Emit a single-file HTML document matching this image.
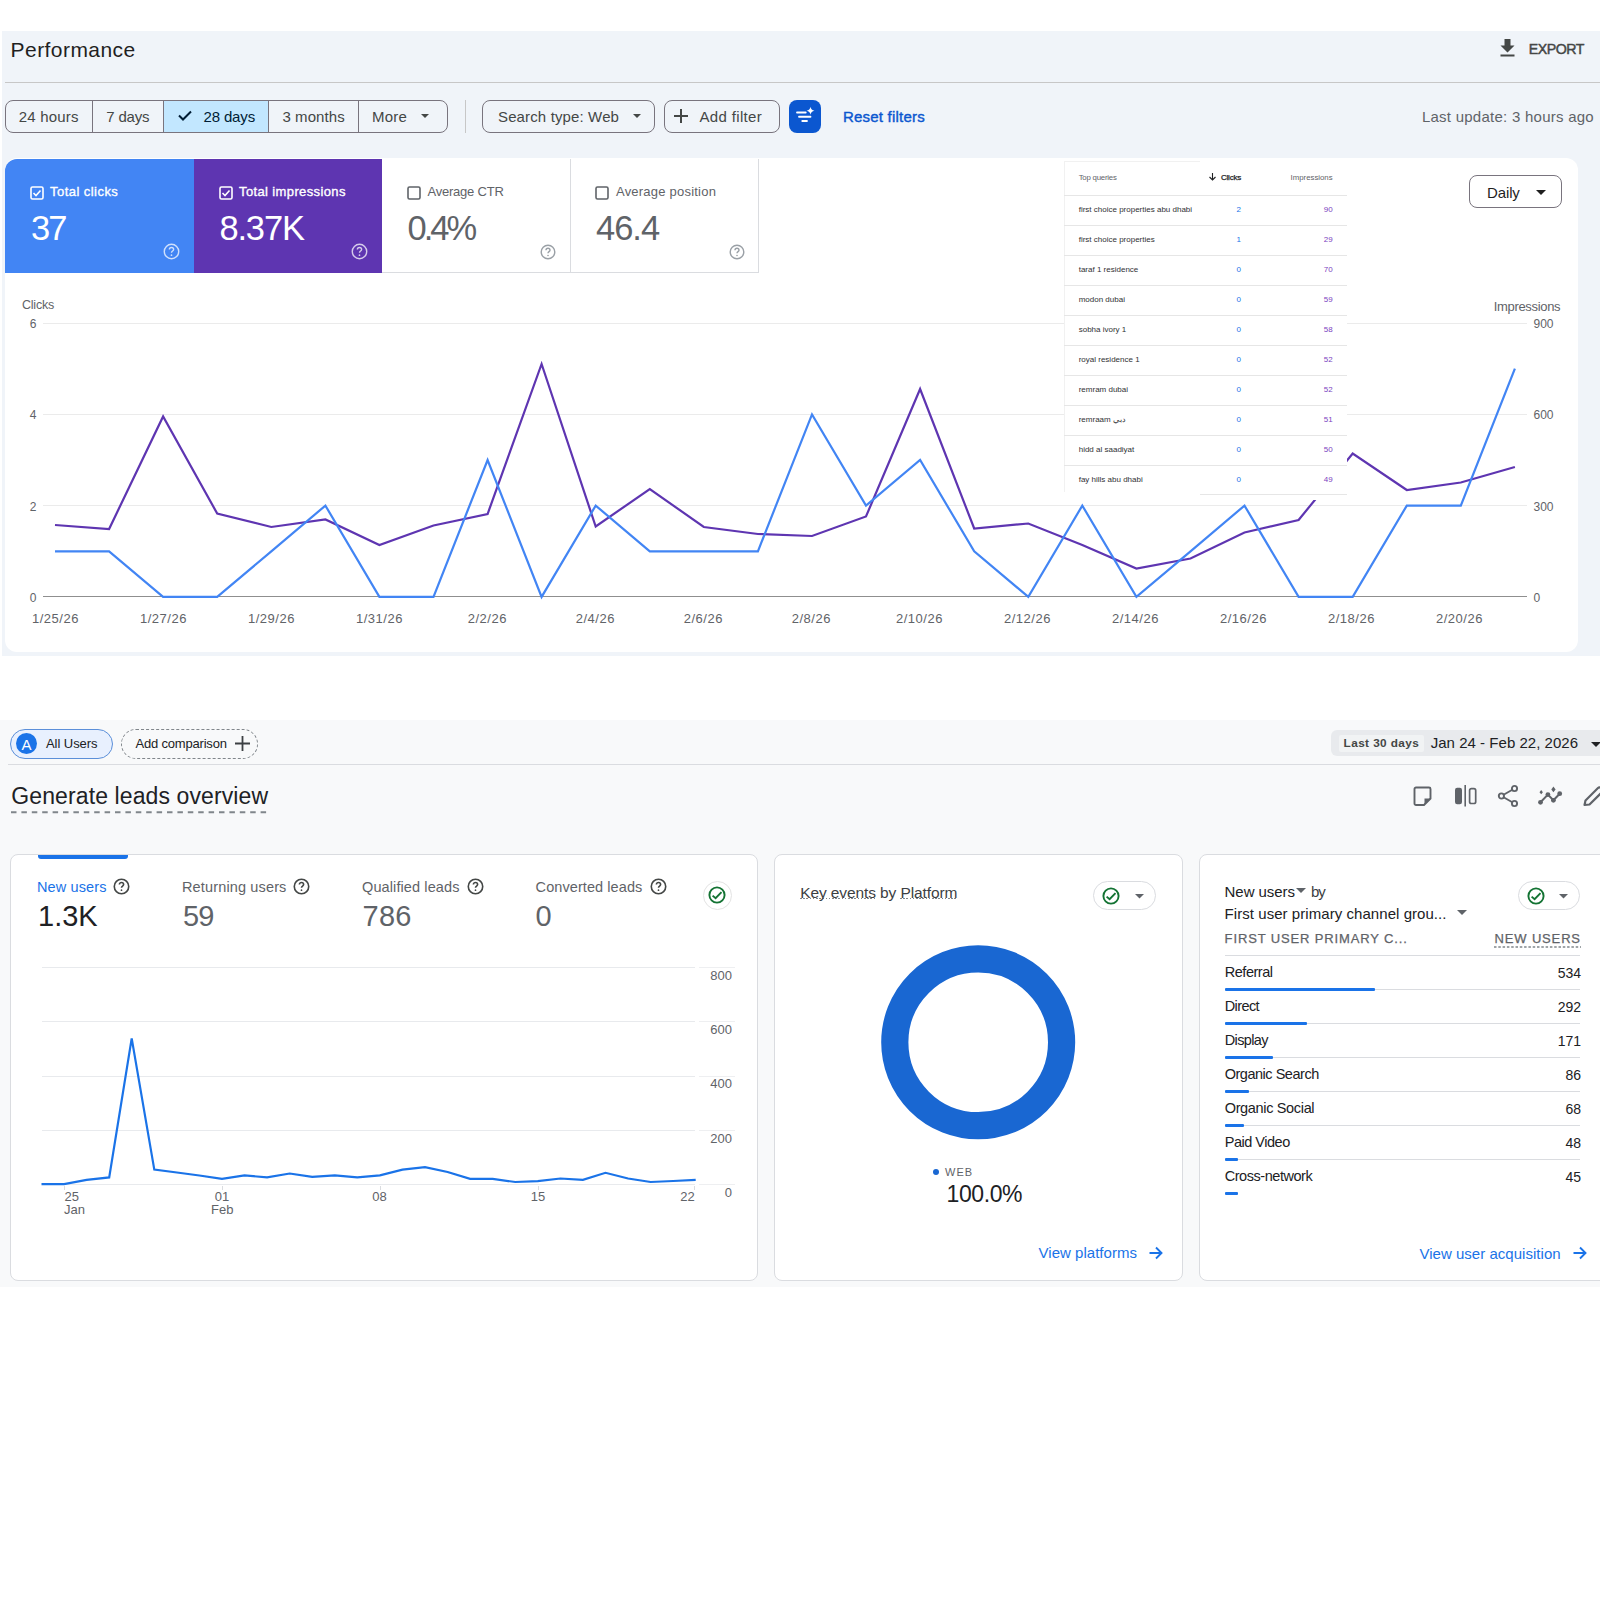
<!DOCTYPE html><html><head><meta charset="utf-8"><style>
html,body{margin:0;padding:0;}
body{width:1600px;height:1600px;position:relative;overflow:hidden;background:#fff;font-family:"Liberation Sans",sans-serif;}
.t{position:absolute;white-space:nowrap;line-height:1;}
svg{position:absolute;overflow:visible;}
.dot{background-image:repeating-linear-gradient(to right,#80868b 0 1.6px,transparent 1.6px 3.2px);background-size:100% 1px;background-repeat:no-repeat;background-position:0 calc(100% - 1.2px);}
</style></head><body>
<div style="position:absolute;left:2.00px;top:31.00px;width:1598.00px;height:625.00px;background:#f0f4f9;"></div><div class="t" style="left:10.60px;top:39.12px;font-size:21px;color:#1f1f1f;font-weight:normal;letter-spacing:0.440px;">Performance</div><svg style="left:1500px;top:39px" width="15" height="18" viewBox="0 0 15 18"><path d="M4.5 0h6v6.5h4L7.5 13.5 0.5 6.5h4z" fill="#444746"/><rect x="0.5" y="15.5" width="14" height="2" fill="#444746"/></svg><div class="t" style="left:1528.75px;top:41.98px;font-size:14.2px;color:#444746;font-weight:normal;-webkit-text-stroke:0.45px #444746;letter-spacing:-0.470px;">EXPORT</div><div style="position:absolute;left:5.00px;top:82.00px;width:1595.00px;height:1.00px;background:#c7c7c7;"></div><div style="position:absolute;left:5.00px;top:100.00px;width:442.60px;height:33.00px;box-sizing:border-box;border:1px solid #79747e;border-radius:8px;"></div><div style="position:absolute;left:164.00px;top:101.00px;width:104.40px;height:31.00px;background:#c2e7ff;"></div><div style="position:absolute;left:92.25px;top:100.00px;width:1.00px;height:33.00px;background:#79747e;"></div><div style="position:absolute;left:163.25px;top:100.00px;width:1.00px;height:33.00px;background:#79747e;"></div><div style="position:absolute;left:267.90px;top:100.00px;width:1.00px;height:33.00px;background:#79747e;"></div><div style="position:absolute;left:358.10px;top:100.00px;width:1.00px;height:33.00px;background:#79747e;"></div><div class="t" style="left:18.75px;top:109.20px;font-size:15px;color:#444746;font-weight:normal;letter-spacing:0.179px;">24 hours</div><div class="t" style="left:106.25px;top:109.20px;font-size:15px;color:#444746;font-weight:normal;letter-spacing:-0.170px;">7 days</div><svg style="left:178px;top:110px" width="14" height="11" viewBox="0 0 14 11"><path d="M1 5.5l4 4L13 1.5" fill="none" stroke="#001d35" stroke-width="2"/></svg><div class="t" style="left:203.60px;top:109.20px;font-size:15px;color:#001d35;font-weight:normal;letter-spacing:-0.167px;">28 days</div><div class="t" style="left:282.40px;top:109.20px;font-size:15px;color:#444746;font-weight:normal;letter-spacing:0.086px;">3 months</div><div class="t" style="left:372.00px;top:109.20px;font-size:15px;color:#444746;font-weight:normal;letter-spacing:0.200px;">More</div><svg style="left:421px;top:114px" width="8" height="4" viewBox="0 0 8 4"><path d="M0 0h8L4 4z" fill="#444746"/></svg><div style="position:absolute;left:464.50px;top:100.00px;width:1.00px;height:33.00px;background:#c7c7c7;"></div><div style="position:absolute;left:481.70px;top:100.00px;width:173.30px;height:32.60px;box-sizing:border-box;border:1px solid #79747e;border-radius:8px;"></div><div class="t" style="left:498.00px;top:109.20px;font-size:15px;color:#444746;font-weight:normal;letter-spacing:0.133px;">Search type: Web</div><svg style="left:633px;top:114px" width="8" height="4" viewBox="0 0 8 4"><path d="M0 0h8L4 4z" fill="#444746"/></svg><div style="position:absolute;left:663.50px;top:100.00px;width:116.50px;height:32.60px;box-sizing:border-box;border:1px solid #79747e;border-radius:8px;"></div><svg style="left:674px;top:109px" width="14" height="14" viewBox="0 0 14 14"><path d="M7 0v14M0 7h14" stroke="#444746" stroke-width="2"/></svg><div class="t" style="left:699.40px;top:109.20px;font-size:15px;color:#444746;font-weight:normal;letter-spacing:0.356px;">Add filter</div><div style="position:absolute;left:788.70px;top:100.00px;width:32.30px;height:32.60px;background:#0b57d0;border-radius:8px;"></div><svg style="left:785px;top:96px" width="40" height="40" viewBox="0 0 40 40"><path d="M12 16.5H20.75M14 20.75H25.5M17.25 25H22" stroke="#fff" stroke-width="1.8" stroke-linecap="round"/><path d="M25.5 10.8Q26 14.25 29.45 14.75Q26 15.25 25.5 18.7Q25 15.25 21.55 14.75Q25 14.25 25.5 10.8z" fill="#fff"/></svg><div class="t" style="left:843.00px;top:109.20px;font-size:15px;color:#0b57d0;font-weight:normal;-webkit-text-stroke:0.4px #0b57d0;letter-spacing:0.208px;">Reset filters</div><div class="t" style="left:1421.90px;top:109.20px;font-size:15px;color:#5f6368;font-weight:normal;letter-spacing:0.254px;">Last update: 3 hours ago</div><div style="position:absolute;left:5.00px;top:158.00px;width:1573.00px;height:494.00px;background:#fff;border-radius:12px;"></div><div style="position:absolute;left:5.00px;top:158.50px;width:188.50px;height:114.50px;background:#4285f4;border-top-left-radius:12px;"></div><div style="position:absolute;left:193.50px;top:158.50px;width:188.50px;height:114.50px;background:#5e35b1;"></div><div style="position:absolute;left:382.00px;top:272.00px;width:376.00px;height:1.00px;background:#dadce0;"></div><div style="position:absolute;left:569.50px;top:158.50px;width:1.00px;height:114.50px;background:#dadce0;"></div><div style="position:absolute;left:757.50px;top:158.50px;width:1.00px;height:114.50px;background:#dadce0;"></div><svg style="left:30px;top:185.6px" width="14" height="14" viewBox="0 0 14 14"><rect x="1" y="1" width="12" height="12" rx="1.5" fill="none" stroke="#fff" stroke-width="1.6"/><path d="M3.5 7l2.5 2.5 4.5-5" fill="none" stroke="#fff" stroke-width="1.6"/></svg><div class="t" style="left:50.00px;top:184.99px;font-size:13px;color:#fff;font-weight:normal;-webkit-text-stroke:0.35px #fff;letter-spacing:0.455px;">Total clicks</div><div class="t" style="left:31.00px;top:210.79px;font-size:34.5px;color:#fff;font-weight:normal;letter-spacing:-2.000px;">37</div><svg style="left:162.50px;top:242.50px" width="17" height="17" viewBox="0 0 24 24"><circle cx="12" cy="12" r="10.2" fill="none" stroke="rgba(255,255,255,0.75)" stroke-width="1.98"/><path d="M9 9.3a3 3 0 0 1 6 0c0 2-3 2.2-3 4.4" fill="none" stroke="rgba(255,255,255,0.75)" stroke-width="1.98"/><circle cx="12" cy="17.2" r="1.2" fill="rgba(255,255,255,0.75)"/></svg><svg style="left:218.5px;top:185.6px" width="14" height="14" viewBox="0 0 14 14"><rect x="1" y="1" width="12" height="12" rx="1.5" fill="none" stroke="#fff" stroke-width="1.6"/><path d="M3.5 7l2.5 2.5 4.5-5" fill="none" stroke="#fff" stroke-width="1.6"/></svg><div class="t" style="left:239.00px;top:184.99px;font-size:13px;color:#fff;font-weight:normal;-webkit-text-stroke:0.35px #fff;letter-spacing:0.375px;">Total impressions</div><div class="t" style="left:219.40px;top:210.79px;font-size:34.5px;color:#fff;font-weight:normal;letter-spacing:-1.150px;">8.37K</div><svg style="left:351.20px;top:243.00px" width="17" height="17" viewBox="0 0 24 24"><circle cx="12" cy="12" r="10.2" fill="none" stroke="rgba(255,255,255,0.75)" stroke-width="1.98"/><path d="M9 9.3a3 3 0 0 1 6 0c0 2-3 2.2-3 4.4" fill="none" stroke="rgba(255,255,255,0.75)" stroke-width="1.98"/><circle cx="12" cy="17.2" r="1.2" fill="rgba(255,255,255,0.75)"/></svg><svg style="left:407px;top:185.6px" width="14" height="14" viewBox="0 0 14 14"><rect x="1" y="1" width="12" height="12" rx="1.5" fill="none" stroke="#5f6368" stroke-width="1.6"/></svg><div class="t" style="left:427.50px;top:184.99px;font-size:13px;color:#5f6368;font-weight:normal;letter-spacing:-0.225px;">Average CTR</div><div class="t" style="left:407.50px;top:210.79px;font-size:34.5px;color:#5f6368;font-weight:normal;letter-spacing:-3.000px;">0.4%</div><svg style="left:540.00px;top:243.75px" width="16" height="16" viewBox="0 0 24 24"><circle cx="12" cy="12" r="10.2" fill="none" stroke="#9aa0a6" stroke-width="2.10"/><path d="M9 9.3a3 3 0 0 1 6 0c0 2-3 2.2-3 4.4" fill="none" stroke="#9aa0a6" stroke-width="2.10"/><circle cx="12" cy="17.2" r="1.2" fill="#9aa0a6"/></svg><svg style="left:595px;top:185.6px" width="14" height="14" viewBox="0 0 14 14"><rect x="1" y="1" width="12" height="12" rx="1.5" fill="none" stroke="#5f6368" stroke-width="1.6"/></svg><div class="t" style="left:616.00px;top:184.99px;font-size:13px;color:#5f6368;font-weight:normal;letter-spacing:0.217px;">Average position</div><div class="t" style="left:596.00px;top:210.79px;font-size:34.5px;color:#5f6368;font-weight:normal;letter-spacing:-1.000px;">46.4</div><svg style="left:728.75px;top:243.75px" width="16" height="16" viewBox="0 0 24 24"><circle cx="12" cy="12" r="10.2" fill="none" stroke="#9aa0a6" stroke-width="2.10"/><path d="M9 9.3a3 3 0 0 1 6 0c0 2-3 2.2-3 4.4" fill="none" stroke="#9aa0a6" stroke-width="2.10"/><circle cx="12" cy="17.2" r="1.2" fill="#9aa0a6"/></svg><div style="position:absolute;left:1468.50px;top:175.20px;width:93.50px;height:33.30px;box-sizing:border-box;border:1px solid #79747e;border-radius:8px;"></div><div class="t" style="left:1487.00px;top:184.80px;font-size:15px;color:#1f1f1f;font-weight:normal;letter-spacing:-0.125px;">Daily</div><svg style="left:1536px;top:190px" width="10" height="5" viewBox="0 0 10 5"><path d="M0 0h10L5 5z" fill="#1f1f1f"/></svg><div style="position:absolute;left:42.50px;top:322.60px;width:1484.50px;height:1.00px;background:#ebebeb;"></div><div style="position:absolute;left:42.50px;top:413.90px;width:1484.50px;height:1.00px;background:#ebebeb;"></div><div style="position:absolute;left:42.50px;top:505.20px;width:1484.50px;height:1.00px;background:#ebebeb;"></div><div style="position:absolute;left:42.50px;top:596.20px;width:1484.50px;height:1.30px;background:#8f8f8f;"></div><div class="t" style="left:21.90px;top:299.42px;font-size:12.5px;color:#5f6368;font-weight:normal;letter-spacing:-0.180px;">Clicks</div><div class="t" style="right:1563.70px;top:318.04px;font-size:12px;color:#5f6368;font-weight:normal;">6</div><div class="t" style="right:1563.70px;top:409.34px;font-size:12px;color:#5f6368;font-weight:normal;">4</div><div class="t" style="right:1563.70px;top:500.64px;font-size:12px;color:#5f6368;font-weight:normal;">2</div><div class="t" style="right:1563.70px;top:591.84px;font-size:12px;color:#5f6368;font-weight:normal;">0</div><div class="t" style="left:1493.70px;top:299.99px;font-size:13px;color:#5f6368;font-weight:normal;letter-spacing:-0.320px;">Impressions</div><div class="t" style="left:1533.50px;top:318.04px;font-size:12px;color:#5f6368;font-weight:normal;">900</div><div class="t" style="left:1533.50px;top:409.34px;font-size:12px;color:#5f6368;font-weight:normal;">600</div><div class="t" style="left:1533.50px;top:500.64px;font-size:12px;color:#5f6368;font-weight:normal;">300</div><div class="t" style="left:1533.50px;top:591.84px;font-size:12px;color:#5f6368;font-weight:normal;">0</div><div class="t" style="left:31.95px;top:611.99px;font-size:13px;color:#5f6368;font-weight:normal;letter-spacing:0.518px;">1/25/26</div><div class="t" style="left:139.95px;top:611.99px;font-size:13px;color:#5f6368;font-weight:normal;letter-spacing:0.518px;">1/27/26</div><div class="t" style="left:247.95px;top:611.99px;font-size:13px;color:#5f6368;font-weight:normal;letter-spacing:0.518px;">1/29/26</div><div class="t" style="left:355.95px;top:611.99px;font-size:13px;color:#5f6368;font-weight:normal;letter-spacing:0.518px;">1/31/26</div><div class="t" style="left:467.70px;top:611.99px;font-size:13px;color:#5f6368;font-weight:normal;letter-spacing:0.520px;">2/2/26</div><div class="t" style="left:575.70px;top:611.99px;font-size:13px;color:#5f6368;font-weight:normal;letter-spacing:0.520px;">2/4/26</div><div class="t" style="left:683.70px;top:611.99px;font-size:13px;color:#5f6368;font-weight:normal;letter-spacing:0.520px;">2/6/26</div><div class="t" style="left:791.70px;top:611.99px;font-size:13px;color:#5f6368;font-weight:normal;letter-spacing:0.520px;">2/8/26</div><div class="t" style="left:895.95px;top:611.99px;font-size:13px;color:#5f6368;font-weight:normal;letter-spacing:0.518px;">2/10/26</div><div class="t" style="left:1003.95px;top:611.99px;font-size:13px;color:#5f6368;font-weight:normal;letter-spacing:0.518px;">2/12/26</div><div class="t" style="left:1111.95px;top:611.99px;font-size:13px;color:#5f6368;font-weight:normal;letter-spacing:0.518px;">2/14/26</div><div class="t" style="left:1219.95px;top:611.99px;font-size:13px;color:#5f6368;font-weight:normal;letter-spacing:0.518px;">2/16/26</div><div class="t" style="left:1327.95px;top:611.99px;font-size:13px;color:#5f6368;font-weight:normal;letter-spacing:0.518px;">2/18/26</div><div class="t" style="left:1435.95px;top:611.99px;font-size:13px;color:#5f6368;font-weight:normal;letter-spacing:0.518px;">2/20/26</div><svg style="left:0;top:0" width="1600" height="700"><polyline points="55.0,525.0 109.1,529.0 163.1,416.5 217.2,513.5 271.3,527.0 325.4,519.5 379.4,545.0 433.5,525.5 487.6,514.0 541.6,364.0 595.7,526.5 649.8,489.0 703.8,527.0 757.9,534.0 812.0,536.0 866.0,516.5 920.1,389.0 974.2,528.5 1028.3,523.5 1082.3,545.0 1136.4,568.5 1190.5,558.5 1244.5,532.5 1298.6,520.0 1352.7,453.5 1406.8,490.0 1460.8,482.5 1514.9,467.0" fill="none" stroke="#5e35b1" stroke-width="2.2" stroke-linejoin="miter"/><polyline points="55.0,551.3 109.1,551.3 163.1,596.9 217.2,596.9 271.3,551.3 325.4,505.6 379.4,596.9 433.5,596.9 487.6,460.0 541.6,596.9 595.7,505.6 649.8,551.3 703.8,551.3 757.9,551.3 812.0,414.4 866.0,505.6 920.1,460.0 974.2,551.3 1028.3,596.9 1082.3,505.6 1136.4,596.9 1190.5,551.3 1244.5,505.6 1298.6,596.9 1352.7,596.9 1406.8,505.6 1460.8,505.6 1514.9,368.7" fill="none" stroke="#4285f4" stroke-width="2.2"/></svg><div style="position:absolute;left:1063.50px;top:160.50px;width:283.00px;height:334.50px;background:#fff;"></div><div style="position:absolute;left:1063.50px;top:160.50px;width:1.00px;height:331.50px;background:#f1f1f1;"></div><div style="position:absolute;left:1063.50px;top:160.50px;width:136.50px;height:1.00px;background:#f1f1f1;"></div><div class="t" style="left:1078.70px;top:174.40px;font-size:7.8px;color:#5f6368;font-weight:normal;letter-spacing:-0.220px;">Top queries</div><svg style="left:1209px;top:173px" width="7" height="8" viewBox="0 0 7 8"><path d="M3.5 0v7M0.5 4l3 3 3-3" fill="none" stroke="#202124" stroke-width="1.1"/></svg><div class="t" style="left:1221.00px;top:174.23px;font-size:8px;color:#202124;font-weight:normal;-webkit-text-stroke:0.25px #202124;letter-spacing:-0.220px;">Clicks</div><div class="t" style="right:267.40px;top:174.40px;font-size:7.8px;color:#5f6368;font-weight:normal;">Impressions</div><div style="position:absolute;left:1063.50px;top:194.80px;width:283.00px;height:1.00px;background:#e6e6e6;"></div><div class="t" style="left:1078.70px;top:206.33px;font-size:8px;color:#303134;font-weight:normal;">first choice properties abu dhabi</div><div class="t" style="right:359.00px;top:206.33px;font-size:8px;color:#1a73e8;font-weight:normal;">2</div><div class="t" style="right:267.40px;top:206.33px;font-size:8px;color:#7b3fc0;font-weight:normal;">90</div><div style="position:absolute;left:1063.50px;top:224.80px;width:283.00px;height:1.00px;background:#e6e6e6;"></div><div class="t" style="left:1078.70px;top:236.33px;font-size:8px;color:#303134;font-weight:normal;">first choice properties</div><div class="t" style="right:359.00px;top:236.33px;font-size:8px;color:#1a73e8;font-weight:normal;">1</div><div class="t" style="right:267.40px;top:236.33px;font-size:8px;color:#7b3fc0;font-weight:normal;">29</div><div style="position:absolute;left:1063.50px;top:254.80px;width:283.00px;height:1.00px;background:#e6e6e6;"></div><div class="t" style="left:1078.70px;top:266.33px;font-size:8px;color:#303134;font-weight:normal;">taraf 1 residence</div><div class="t" style="right:359.00px;top:266.33px;font-size:8px;color:#1a73e8;font-weight:normal;">0</div><div class="t" style="right:267.40px;top:266.33px;font-size:8px;color:#7b3fc0;font-weight:normal;">70</div><div style="position:absolute;left:1063.50px;top:284.80px;width:283.00px;height:1.00px;background:#e6e6e6;"></div><div class="t" style="left:1078.70px;top:296.33px;font-size:8px;color:#303134;font-weight:normal;">modon dubai</div><div class="t" style="right:359.00px;top:296.33px;font-size:8px;color:#1a73e8;font-weight:normal;">0</div><div class="t" style="right:267.40px;top:296.33px;font-size:8px;color:#7b3fc0;font-weight:normal;">59</div><div style="position:absolute;left:1063.50px;top:314.80px;width:283.00px;height:1.00px;background:#e6e6e6;"></div><div class="t" style="left:1078.70px;top:326.33px;font-size:8px;color:#303134;font-weight:normal;">sobha ivory 1</div><div class="t" style="right:359.00px;top:326.33px;font-size:8px;color:#1a73e8;font-weight:normal;">0</div><div class="t" style="right:267.40px;top:326.33px;font-size:8px;color:#7b3fc0;font-weight:normal;">58</div><div style="position:absolute;left:1063.50px;top:344.80px;width:283.00px;height:1.00px;background:#e6e6e6;"></div><div class="t" style="left:1078.70px;top:356.33px;font-size:8px;color:#303134;font-weight:normal;">royal residence 1</div><div class="t" style="right:359.00px;top:356.33px;font-size:8px;color:#1a73e8;font-weight:normal;">0</div><div class="t" style="right:267.40px;top:356.33px;font-size:8px;color:#7b3fc0;font-weight:normal;">52</div><div style="position:absolute;left:1063.50px;top:374.80px;width:283.00px;height:1.00px;background:#e6e6e6;"></div><div class="t" style="left:1078.70px;top:386.33px;font-size:8px;color:#303134;font-weight:normal;">remram dubai</div><div class="t" style="right:359.00px;top:386.33px;font-size:8px;color:#1a73e8;font-weight:normal;">0</div><div class="t" style="right:267.40px;top:386.33px;font-size:8px;color:#7b3fc0;font-weight:normal;">52</div><div style="position:absolute;left:1063.50px;top:404.80px;width:283.00px;height:1.00px;background:#e6e6e6;"></div><div class="t" style="left:1078.70px;top:416.33px;font-size:8px;color:#303134;font-weight:normal;">remraam دبي</div><div class="t" style="right:359.00px;top:416.33px;font-size:8px;color:#1a73e8;font-weight:normal;">0</div><div class="t" style="right:267.40px;top:416.33px;font-size:8px;color:#7b3fc0;font-weight:normal;">51</div><div style="position:absolute;left:1063.50px;top:434.80px;width:283.00px;height:1.00px;background:#e6e6e6;"></div><div class="t" style="left:1078.70px;top:446.33px;font-size:8px;color:#303134;font-weight:normal;">hidd al saadiyat</div><div class="t" style="right:359.00px;top:446.33px;font-size:8px;color:#1a73e8;font-weight:normal;">0</div><div class="t" style="right:267.40px;top:446.33px;font-size:8px;color:#7b3fc0;font-weight:normal;">50</div><div style="position:absolute;left:1063.50px;top:464.80px;width:283.00px;height:1.00px;background:#e6e6e6;"></div><div class="t" style="left:1078.70px;top:476.33px;font-size:8px;color:#303134;font-weight:normal;">fay hills abu dhabi</div><div class="t" style="right:359.00px;top:476.33px;font-size:8px;color:#1a73e8;font-weight:normal;">0</div><div class="t" style="right:267.40px;top:476.33px;font-size:8px;color:#7b3fc0;font-weight:normal;">49</div><div style="position:absolute;left:1200.00px;top:495.00px;width:146.50px;height:5.00px;background:#fff;"></div><div style="position:absolute;left:1200.00px;top:494.30px;width:146.50px;height:1.00px;background:#e6e6e6;"></div><div style="position:absolute;left:0.00px;top:720.00px;width:1600.00px;height:567.00px;background:#f8f9fa;"></div><div style="position:absolute;left:10.30px;top:729.00px;width:102.30px;height:29.60px;box-sizing:border-box;border:1.8px solid #5b8fd9;border-radius:15px;background:#e8f0fe;"></div><div style="position:absolute;left:16px;top:733px;width:21px;height:21px;border-radius:50%;background:#1a73e8;"></div><div class="t" style="left:26.50px;transform:translateX(-50%);top:736.60px;font-size:15px;color:#fff;font-weight:normal;">A</div><div class="t" style="left:46.00px;top:737.39px;font-size:13px;color:#202124;font-weight:normal;letter-spacing:-0.062px;">All Users</div><div style="position:absolute;left:121.00px;top:729.00px;width:137.00px;height:29.60px;box-sizing:border-box;border:1px dashed #80868b;border-radius:15px;"></div><div class="t" style="left:135.50px;top:737.39px;font-size:13px;color:#202124;font-weight:normal;letter-spacing:-0.192px;">Add comparison</div><svg style="left:234.5px;top:736px" width="15" height="15" viewBox="0 0 15 15"><path d="M7.5 0v15M0 7.5h15" stroke="#3c4043" stroke-width="1.8"/></svg><div style="position:absolute;left:8.40px;top:764.00px;width:1591.60px;height:1.00px;background:#dadce0;"></div><div style="position:absolute;left:1331.00px;top:729.60px;width:279.00px;height:26.80px;background:#e8eaed;border-radius:6px;"></div><div style="position:absolute;left:1339.00px;top:735.00px;width:85.00px;height:17.00px;background:#f1f3f4;border-radius:2px;"></div><div class="t" style="left:1343.60px;top:737.71px;font-size:11.8px;color:#444746;font-weight:bold;letter-spacing:0.400px;">Last 30 days</div><div class="t" style="left:1430.70px;top:735.30px;font-size:15px;color:#202124;font-weight:normal;letter-spacing:0.030px;">Jan 24 - Feb 22, 2026</div><svg style="left:1591px;top:742px" width="10" height="5" viewBox="0 0 10 5"><path d="M0 0h10L5 5z" fill="#202124"/></svg><div class="t" style="left:11.25px;top:785.23px;font-size:23px;color:#202124;font-weight:normal;letter-spacing:0.111px;">Generate leads overview</div><svg style="left:11px;top:810.5px" width="258" height="3" viewBox="0 0 258 3"><path d="M0 1.2H258" stroke="#80868b" stroke-width="2" stroke-dasharray="5.5 4.9"/></svg><svg style="left:1413px;top:786px" width="20" height="20" viewBox="0 0 20 20"><path d="M3 1.5h13a1.5 1.5 0 0 1 1.5 1.5v9.5l-6.5 6.5H3A1.5 1.5 0 0 1 1.5 17.5V3A1.5 1.5 0 0 1 3 1.5z" fill="none" stroke="#5f6368" stroke-width="1.9"/><path d="M11.5 18.5v-6h6z" fill="#5f6368"/></svg><svg style="left:1454px;top:785px" width="23" height="22" viewBox="0 0 23 22"><rect x="1" y="2.8" width="7" height="16.5" rx="2.2" fill="#5f6368"/><path d="M11.2 0v21.5" stroke="#5f6368" stroke-width="1.6"/><rect x="15.6" y="3.6" width="6.1" height="14.9" rx="1.8" fill="none" stroke="#5f6368" stroke-width="1.7"/></svg><svg style="left:1497px;top:784px" width="22" height="24" viewBox="0 0 22 24"><path d="M4.4 12L17.5 4.5M4.4 12l13.1 7.5" stroke="#5f6368" stroke-width="1.9"/><circle cx="17.5" cy="4.5" r="2.6" fill="#f8f9fa" stroke="#5f6368" stroke-width="1.9"/><circle cx="4.4" cy="12" r="2.6" fill="#f8f9fa" stroke="#5f6368" stroke-width="1.9"/><circle cx="17.5" cy="19.5" r="2.6" fill="#f8f9fa" stroke="#5f6368" stroke-width="1.9"/></svg><svg style="left:1536px;top:786px" width="28" height="20" viewBox="0 0 28 20"><path d="M4.5 16.3L11.9 8.6 17.4 14.3 23.7 7.7" fill="none" stroke="#5f6368" stroke-width="2"/><circle cx="4.5" cy="16.3" r="2.4" fill="#5f6368"/><circle cx="11.9" cy="8.6" r="2.4" fill="#5f6368"/><circle cx="17.4" cy="14.3" r="2.4" fill="#5f6368"/><circle cx="23.7" cy="7.7" r="2.4" fill="#5f6368"/><path d="M5.2 4.1l1.7 2.1-1.7 2.1-1.7-2.1z" fill="#5f6368"/><path d="M17.4 0.6l2.2 2.8-2.2 2.8-2.1-2.8z" fill="#5f6368"/></svg><svg style="left:1580px;top:784px" width="26" height="26" viewBox="0 0 26 26"><path d="M4.5 21l1-4.5L18 4a2 2 0 0 1 2.8 0l1.3 1.3a2 2 0 0 1 0 2.8L9.5 20.5z" fill="none" stroke="#5f6368" stroke-width="2.2" stroke-linejoin="round"/></svg><div style="position:absolute;left:9.50px;top:854.30px;width:748.80px;height:426.40px;box-sizing:border-box;border:1px solid #dadce0;border-radius:8px;background:#fff;"></div><div style="position:absolute;left:774.00px;top:854.30px;width:408.80px;height:426.40px;box-sizing:border-box;border:1px solid #dadce0;border-radius:8px;background:#fff;"></div><div style="position:absolute;left:1198.80px;top:854.30px;width:421.20px;height:426.40px;box-sizing:border-box;border:1px solid #dadce0;border-radius:8px;background:#fff;"></div><div style="position:absolute;left:38.00px;top:855.00px;width:90.00px;height:4.40px;background:#1a73e8;border-radius:0 0 3px 3px;"></div><div class="t" style="left:37.00px;top:880.12px;font-size:14.5px;color:#1a73e8;font-weight:normal;letter-spacing:0.125px;">New users</div><svg style="left:112.90px;top:877.70px" width="17" height="17" viewBox="0 0 24 24"><circle cx="12" cy="12" r="10.2" fill="none" stroke="#444746" stroke-width="2.26"/><path d="M9 9.3a3 3 0 0 1 6 0c0 2-3 2.2-3 4.4" fill="none" stroke="#444746" stroke-width="2.26"/><circle cx="12" cy="17.2" r="1.2" fill="#444746"/></svg><div class="t" style="left:38.00px;top:901.85px;font-size:29px;color:#202124;font-weight:normal;letter-spacing:0.000px;">1.3K</div><div class="t" style="left:182.00px;top:880.12px;font-size:14.5px;color:#5f6368;font-weight:normal;letter-spacing:0.143px;">Returning users</div><svg style="left:293.10px;top:877.70px" width="17" height="17" viewBox="0 0 24 24"><circle cx="12" cy="12" r="10.2" fill="none" stroke="#444746" stroke-width="2.26"/><path d="M9 9.3a3 3 0 0 1 6 0c0 2-3 2.2-3 4.4" fill="none" stroke="#444746" stroke-width="2.26"/><circle cx="12" cy="17.2" r="1.2" fill="#444746"/></svg><div class="t" style="left:183.00px;top:901.85px;font-size:29px;color:#5f6368;font-weight:normal;letter-spacing:-1.000px;">59</div><div class="t" style="left:362.00px;top:880.12px;font-size:14.5px;color:#5f6368;font-weight:normal;letter-spacing:0.107px;">Qualified leads</div><svg style="left:466.50px;top:877.70px" width="17" height="17" viewBox="0 0 24 24"><circle cx="12" cy="12" r="10.2" fill="none" stroke="#444746" stroke-width="2.26"/><path d="M9 9.3a3 3 0 0 1 6 0c0 2-3 2.2-3 4.4" fill="none" stroke="#444746" stroke-width="2.26"/><circle cx="12" cy="17.2" r="1.2" fill="#444746"/></svg><div class="t" style="left:362.50px;top:901.85px;font-size:29px;color:#5f6368;font-weight:normal;letter-spacing:0.250px;">786</div><div class="t" style="left:535.60px;top:880.12px;font-size:14.5px;color:#5f6368;font-weight:normal;letter-spacing:0.079px;">Converted leads</div><svg style="left:649.50px;top:877.70px" width="17" height="17" viewBox="0 0 24 24"><circle cx="12" cy="12" r="10.2" fill="none" stroke="#444746" stroke-width="2.26"/><path d="M9 9.3a3 3 0 0 1 6 0c0 2-3 2.2-3 4.4" fill="none" stroke="#444746" stroke-width="2.26"/><circle cx="12" cy="17.2" r="1.2" fill="#444746"/></svg><div class="t" style="left:535.60px;top:901.85px;font-size:29px;color:#5f6368;font-weight:normal;letter-spacing:-0.900px;">0</div><div style="position:absolute;left:702.5px;top:880.5px;width:29px;height:29px;box-sizing:border-box;border:1px solid #e3e3e3;border-radius:50%;background:#fff;"></div><svg style="left:707.00px;top:885.00px" width="20" height="20" viewBox="0 0 20 20"><circle cx="10" cy="10" r="7.6" fill="none" stroke="#137333" stroke-width="1.9"/><path d="M5.6 10.6l3 2.6 5.9-6.1" fill="none" stroke="#137333" stroke-width="1.9"/></svg><div style="position:absolute;left:41.50px;top:967.00px;width:653.80px;height:1.00px;background:#e8eaed;"></div><div style="position:absolute;left:698.80px;top:967.00px;width:35.90px;height:1.00px;background:#eeeff1;"></div><div style="position:absolute;left:41.50px;top:1021.20px;width:653.80px;height:1.00px;background:#e8eaed;"></div><div style="position:absolute;left:698.80px;top:1021.20px;width:35.90px;height:1.00px;background:#eeeff1;"></div><div style="position:absolute;left:41.50px;top:1075.50px;width:653.80px;height:1.00px;background:#e8eaed;"></div><div style="position:absolute;left:698.80px;top:1075.50px;width:35.90px;height:1.00px;background:#eeeff1;"></div><div style="position:absolute;left:41.50px;top:1129.90px;width:653.80px;height:1.00px;background:#e8eaed;"></div><div style="position:absolute;left:698.80px;top:1129.90px;width:35.90px;height:1.00px;background:#eeeff1;"></div><div style="position:absolute;left:41.50px;top:1184.20px;width:653.80px;height:1.00px;background:#e8eaed;"></div><div style="position:absolute;left:698.80px;top:1184.20px;width:35.90px;height:1.00px;background:#eeeff1;"></div><div class="t" style="right:868.00px;top:968.99px;font-size:13px;color:#5f6368;font-weight:normal;">800</div><div class="t" style="right:868.00px;top:1023.19px;font-size:13px;color:#5f6368;font-weight:normal;">600</div><div class="t" style="right:868.00px;top:1077.49px;font-size:13px;color:#5f6368;font-weight:normal;">400</div><div class="t" style="right:868.00px;top:1131.89px;font-size:13px;color:#5f6368;font-weight:normal;">200</div><div class="t" style="right:868.00px;top:1186.19px;font-size:13px;color:#5f6368;font-weight:normal;">0</div><svg style="left:0;top:0" width="1600" height="1300"><polyline points="41.5,1184.2 64.1,1184.2 86.6,1179.8 109.2,1177.4 131.7,1038.4 154.3,1169.6 176.9,1172.5 199.4,1175.5 222.0,1178.9 244.5,1175.4 267.1,1177.4 289.7,1173.5 312.2,1176.9 334.8,1175.4 357.3,1177.4 379.9,1175.4 402.5,1169.6 425.0,1167.2 447.6,1172.0 470.1,1178.9 492.7,1178.9 515.3,1182.0 537.8,1181.2 560.4,1178.5 582.9,1179.8 605.5,1172.8 628.1,1178.5 650.6,1182.0 673.2,1181.0 695.7,1179.8" fill="none" stroke="#1a73e8" stroke-width="2.2" stroke-linejoin="miter"/></svg><div class="t" style="left:71.70px;transform:translateX(-50%);top:1190.29px;font-size:13px;color:#5f6368;font-weight:normal;">25</div><div class="t" style="left:222.10px;transform:translateX(-50%);top:1190.29px;font-size:13px;color:#5f6368;font-weight:normal;">01</div><div class="t" style="left:379.60px;transform:translateX(-50%);top:1190.29px;font-size:13px;color:#5f6368;font-weight:normal;">08</div><div class="t" style="left:538.10px;transform:translateX(-50%);top:1190.29px;font-size:13px;color:#5f6368;font-weight:normal;">15</div><div class="t" style="right:905.30px;top:1190.29px;font-size:13px;color:#5f6368;font-weight:normal;">22</div><div style="position:absolute;left:63.60px;top:1185.50px;width:1.00px;height:4.50px;background:#dadce0;"></div><div style="position:absolute;left:221.80px;top:1185.50px;width:1.00px;height:4.50px;background:#dadce0;"></div><div style="position:absolute;left:379.70px;top:1185.50px;width:1.00px;height:4.50px;background:#dadce0;"></div><div style="position:absolute;left:537.60px;top:1185.50px;width:1.00px;height:4.50px;background:#dadce0;"></div><div style="position:absolute;left:694.20px;top:1185.50px;width:1.00px;height:4.50px;background:#dadce0;"></div><div class="t" style="left:74.50px;transform:translateX(-50%);top:1202.99px;font-size:13px;color:#5f6368;font-weight:normal;">Jan</div><div class="t" style="left:222.30px;transform:translateX(-50%);top:1202.99px;font-size:13px;color:#5f6368;font-weight:normal;">Feb</div><div class="t" style="left:800.20px;top:884.68px;font-size:15.5px;color:#3c4043;font-weight:normal;letter-spacing:-0.105px;"><span class="dot">Key events</span> by <span class="dot">Platform</span></div><div style="position:absolute;left:1093.30px;top:881.00px;width:63.00px;height:29.30px;box-sizing:border-box;border:1.5px solid #dadce0;border-radius:15px;background:#fff;"></div><svg style="left:1101.00px;top:885.50px" width="20" height="20" viewBox="0 0 20 20"><circle cx="10" cy="10" r="7.6" fill="none" stroke="#137333" stroke-width="1.9"/><path d="M5.6 10.6l3 2.6 5.9-6.1" fill="none" stroke="#137333" stroke-width="1.9"/></svg><svg style="left:1134.5px;top:893.8px" width="9" height="5" viewBox="0 0 9 5"><path d="M0 0h9L4.5 4.5z" fill="#5f6368"/></svg><svg style="left:878px;top:942px" width="200" height="200" viewBox="0 0 200 200"><circle cx="100.2" cy="100.3" r="83.4" fill="none" stroke="#1967d2" stroke-width="27.2"/></svg><div style="position:absolute;left:933px;top:1169px;width:6px;height:6px;border-radius:50%;background:#1967d2;"></div><div class="t" style="left:945.00px;top:1166.69px;font-size:11px;color:#5f6368;font-weight:normal;letter-spacing:1.000px;">WEB</div><div class="t" style="left:946.60px;top:1182.83px;font-size:23px;color:#202124;font-weight:normal;letter-spacing:-0.420px;">100.0%</div><div class="t" style="left:1038.50px;top:1245.30px;font-size:15px;color:#1a73e8;font-weight:normal;letter-spacing:0.031px;">View platforms</div><svg style="left:1148.5px;top:1245.5px" width="14" height="14" viewBox="0 0 14 14"><path d="M0.5 7h12M7 1.5L12.5 7 7 12.5" fill="none" stroke="#1a73e8" stroke-width="1.9"/></svg><div class="t" style="left:1224.60px;top:884.10px;font-size:15px;color:#202124;font-weight:normal;letter-spacing:-0.062px;">New users</div><svg style="left:1296px;top:888px" width="10" height="5" viewBox="0 0 10 5"><path d="M0 0h10L5 5z" fill="#5f6368"/></svg><div class="t" style="left:1311.00px;top:884.10px;font-size:15px;color:#3c4043;font-weight:normal;letter-spacing:-1.100px;">by</div><div class="t" style="left:1224.60px;top:905.50px;font-size:15px;color:#202124;font-weight:normal;letter-spacing:0.055px;">First user primary channel grou...</div><svg style="left:1456.7px;top:910px" width="10" height="5" viewBox="0 0 10 5"><path d="M0 0h10L5 5z" fill="#5f6368"/></svg><div style="position:absolute;left:1517.70px;top:880.80px;width:62.60px;height:29.50px;box-sizing:border-box;border:1.5px solid #dadce0;border-radius:15px;background:#fff;"></div><svg style="left:1525.60px;top:886.00px" width="20" height="20" viewBox="0 0 20 20"><circle cx="10" cy="10" r="7.6" fill="none" stroke="#137333" stroke-width="1.9"/><path d="M5.6 10.6l3 2.6 5.9-6.1" fill="none" stroke="#137333" stroke-width="1.9"/></svg><svg style="left:1559px;top:894px" width="9" height="5" viewBox="0 0 9 5"><path d="M0 0h9L4.5 4.5z" fill="#5f6368"/></svg><div class="t" style="left:1224.60px;top:931.79px;font-size:13px;color:#5f6368;font-weight:normal;-webkit-text-stroke:0.25px #5f6368;letter-spacing:0.868px;">FIRST USER PRIMARY C...</div><div class="t" style="left:1494.60px;top:931.79px;font-size:13px;color:#5f6368;font-weight:normal;-webkit-text-stroke:0.25px #5f6368;letter-spacing:0.838px;">NEW USERS</div><svg style="left:1494px;top:946px" width="87" height="2" viewBox="0 0 87 2"><path d="M0 1H87" stroke="#80868b" stroke-width="1.3" stroke-dasharray="2.5 1.8"/></svg><div style="position:absolute;left:1224.60px;top:954.60px;width:355.90px;height:1.00px;background:#dadce0;"></div><div class="t" style="left:1224.70px;top:965.42px;font-size:14.5px;color:#202124;font-weight:normal;letter-spacing:-0.457px;">Referral</div><div class="t" style="right:19.00px;top:965.85px;font-size:14px;color:#202124;font-weight:normal;">534</div><div style="position:absolute;left:1224.60px;top:989.10px;width:355.90px;height:1.20px;background:#dadce0;"></div><div style="position:absolute;left:1224.60px;top:988.40px;width:150.00px;height:2.70px;background:#1a73e8;border-radius:1px;"></div><div class="t" style="left:1224.70px;top:999.37px;font-size:14.5px;color:#202124;font-weight:normal;letter-spacing:-0.590px;">Direct</div><div class="t" style="right:19.00px;top:999.80px;font-size:14px;color:#202124;font-weight:normal;">292</div><div style="position:absolute;left:1224.60px;top:1023.05px;width:355.90px;height:1.20px;background:#dadce0;"></div><div style="position:absolute;left:1224.60px;top:1022.35px;width:82.50px;height:2.70px;background:#1a73e8;border-radius:1px;"></div><div class="t" style="left:1224.70px;top:1033.32px;font-size:14.5px;color:#202124;font-weight:normal;letter-spacing:-0.617px;">Display</div><div class="t" style="right:19.00px;top:1033.75px;font-size:14px;color:#202124;font-weight:normal;">171</div><div style="position:absolute;left:1224.60px;top:1057.00px;width:355.90px;height:1.20px;background:#dadce0;"></div><div style="position:absolute;left:1224.60px;top:1056.30px;width:48.30px;height:2.70px;background:#1a73e8;border-radius:1px;"></div><div class="t" style="left:1224.70px;top:1067.27px;font-size:14.5px;color:#202124;font-weight:normal;letter-spacing:-0.477px;">Organic Search</div><div class="t" style="right:19.00px;top:1067.70px;font-size:14px;color:#202124;font-weight:normal;">86</div><div style="position:absolute;left:1224.60px;top:1090.95px;width:355.90px;height:1.20px;background:#dadce0;"></div><div style="position:absolute;left:1224.60px;top:1090.25px;width:24.40px;height:2.70px;background:#1a73e8;border-radius:1px;"></div><div class="t" style="left:1224.70px;top:1101.22px;font-size:14.5px;color:#202124;font-weight:normal;letter-spacing:-0.338px;">Organic Social</div><div class="t" style="right:19.00px;top:1101.65px;font-size:14px;color:#202124;font-weight:normal;">68</div><div style="position:absolute;left:1224.60px;top:1124.90px;width:355.90px;height:1.20px;background:#dadce0;"></div><div style="position:absolute;left:1224.60px;top:1124.20px;width:19.20px;height:2.70px;background:#1a73e8;border-radius:1px;"></div><div class="t" style="left:1224.70px;top:1135.17px;font-size:14.5px;color:#202124;font-weight:normal;letter-spacing:-0.478px;">Paid Video</div><div class="t" style="right:19.00px;top:1135.60px;font-size:14px;color:#202124;font-weight:normal;">48</div><div style="position:absolute;left:1224.60px;top:1158.85px;width:355.90px;height:1.20px;background:#dadce0;"></div><div style="position:absolute;left:1224.60px;top:1158.15px;width:13.90px;height:2.70px;background:#1a73e8;border-radius:1px;"></div><div class="t" style="left:1224.70px;top:1169.12px;font-size:14.5px;color:#202124;font-weight:normal;letter-spacing:-0.454px;">Cross-network</div><div class="t" style="right:19.00px;top:1169.55px;font-size:14px;color:#202124;font-weight:normal;">45</div><div style="position:absolute;left:1224.60px;top:1192.10px;width:13.00px;height:2.70px;background:#1a73e8;border-radius:1px;"></div><div class="t" style="left:1419.40px;top:1246.05px;font-size:15px;color:#1a73e8;font-weight:normal;letter-spacing:0.030px;">View user acquisition</div><svg style="left:1573px;top:1245.5px" width="14" height="14" viewBox="0 0 14 14"><path d="M0.5 7h12M7 1.5L12.5 7 7 12.5" fill="none" stroke="#1a73e8" stroke-width="1.9"/></svg></body></html>
